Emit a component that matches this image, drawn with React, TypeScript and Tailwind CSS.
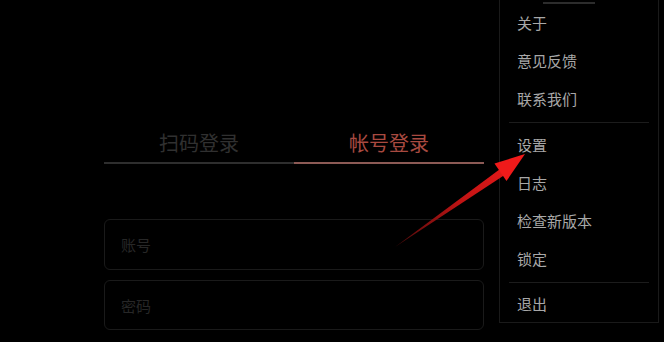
import React, { useState } from 'react';

const menuGroups: string[][] = [
  ['关于', '意见反馈', '联系我们'],
  ['设置', '日志', '检查新版本', '锁定'],
  ['退出'],
];

const font = { fontFamily: '"Noto Sans CJK SC", "Noto Sans", sans-serif' };

const Arrow: React.FC = () => (
  <svg className="absolute left-0 top-0 pointer-events-none" width="664" height="342" viewBox="0 0 664 342">
    <defs>
      <linearGradient id="shaft" x1="395" y1="247" x2="526" y2="155" gradientUnits="userSpaceOnUse">
        <stop offset="0" stopColor="#4a0a0a" />
        <stop offset="0.5" stopColor="#c01414" />
        <stop offset="1" stopColor="#f01a1a" />
      </linearGradient>
    </defs>
    <polygon points="395,247 499.4,169.5 503.8,175.6" fill="url(#shaft)" />
    <polygon points="525,154 494.5,163.5 506.5,181" fill="#f01a1a" />
  </svg>
);

const App: React.FC = () => {
  const [tab, setTab] = useState<'qr' | 'account'>('account');

  return (
    <div className="relative w-[664px] h-[342px] overflow-hidden bg-black" style={font}>
      <div className="flex flex-col w-[380px] ml-[104px] pt-[129px]">
        <div className="flex">
          <button
            onClick={() => setTab('qr')}
            className={`w-1/2 pb-[5px] text-[20px] leading-[28px] border-b-2 ${tab === 'qr' ? 'text-[#a84a40] border-[#8c5a55]' : 'text-[#303030] border-[#2e2e2e]'}`}
          >
            扫码登录
          </button>
          <button
            onClick={() => setTab('account')}
            className={`w-1/2 pb-[5px] text-[20px] leading-[28px] border-b-2 ${tab === 'account' ? 'text-[#a84a40] border-[#8c5a55]' : 'text-[#303030] border-[#2e2e2e]'}`}
          >
            帐号登录
          </button>
        </div>
        <div className="mt-[55px] flex flex-col gap-[10px]">
          <input
            placeholder="账号"
            className="h-[51px] px-4 rounded-md border border-[#1a1a1a] bg-black text-[15px] text-[#aaa] placeholder:text-[#272727] outline-none"
          />
          <input
            type="password"
            placeholder="密码"
            className="h-[50px] px-4 rounded-md border border-[#1a1a1a] bg-black text-[15px] text-[#aaa] placeholder:text-[#272727] outline-none"
          />
        </div>
      </div>

      <div className="absolute left-[499px] top-[-1px] w-[160px] h-[324px] border border-[#1a1a1a] bg-black">
        <div className="absolute left-[43px] top-[2px] w-[52px] h-[2px] bg-[#2c2c2c]" />
        {menuGroups.map((group, gi) => (
          <div key={gi}>
            {gi > 0 && <div className="mx-[9px] h-px bg-[#1c1c1c]" />}
            <div className={gi === 0 ? 'pt-[4px] pb-[4px]' : gi === 1 ? 'pt-[3px] pb-[4px]' : 'pt-[2px]'}>
              {group.map(item => (
                <div key={item} className="h-[38px] flex items-center pl-[17px] text-[15px] text-[#a8a8a8]">
                  {item}
                </div>
              ))}
            </div>
          </div>
        ))}
      </div>

      <Arrow />
    </div>
  );
};

export default App;
